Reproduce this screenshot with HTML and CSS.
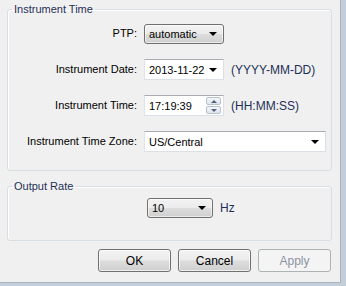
FILE: index.html
```html
<!DOCTYPE html>
<html>
<head>
<meta charset="utf-8">
<link rel="stylesheet" href="styles.css">
</head>
<body>
<div class="client">
  <fieldset class="group g1">
    <legend>Instrument Time</legend>
    <div class="form">
      <label class="lbl">PTP:</label>
      <div class="field">
        <div class="combo btn w80"><span>automatic</span><i class="arrow"></i></div>
      </div>
      <label class="lbl">Instrument Date:</label>
      <div class="field">
        <div class="combo edit w80"><span>2013-11-22</span><i class="arrow"></i></div>
        <span class="hint">(YYYY-MM-DD)</span>
      </div>
      <label class="lbl">Instrument Time:</label>
      <div class="field">
        <div class="spin edit w80"><span>17:19:39</span>
          <div class="spinbtns"><div class="sb up"><i></i></div><div class="sb down"><i></i></div></div>
        </div>
        <span class="hint">(HH:MM:SS)</span>
      </div>
      <label class="lbl">Instrument Time Zone:</label>
      <div class="field">
        <div class="combo edit wzone"><span>US/Central</span><i class="arrow"></i></div>
      </div>
    </div>
  </fieldset>
  <fieldset class="group g2">
    <legend>Output Rate</legend>
    <div class="rate">
      <div class="combo btn w66"><span>10</span><i class="arrow"></i></div>
      <span class="hint">Hz</span>
    </div>
  </fieldset>
  <div class="buttons">
    <button class="pb">OK</button>
    <button class="pb">Cancel</button>
    <button class="pb disabled">Apply</button>
  </div>
</div>
</body>
</html>
```
FILE: styles.css
```css
html, body {
  margin: 0;
  padding: 0;
}
body {
  width: 346px;
  height: 286px;
  background: #c3cedb;
  font-family: "Liberation Sans", Arial, sans-serif;
  font-size: 11px;
  color: #000;
  overflow: hidden;
}
.client {
  box-sizing: border-box;
  width: 341px;
  height: 283px;
  background: #f0f0f0;
  border-right: 1px solid #a9b4c2;
  border-bottom: 1px solid #a9b4c2;
  padding: 3px 8px 0 7px;
  display: flex;
  flex-direction: column;
}
.group {
  margin: 0;
  padding: 0;
  border: 1px solid #d5dfe5;
  border-radius: 3px;
  box-shadow: inset 1px 1px 0 #fff;
}
.group legend {
  margin-left: 4px;
  padding: 0 2px;
  color: #1e2f57;
  line-height: 13px;
}
.g1 {
  height: 168px;
  box-sizing: border-box;
}
.form {
  display: grid;
  grid-template-columns: 129px 1fr;
  column-gap: 7px;
  row-gap: 15px;
  padding-top: 7px;
}
.lbl {
  text-align: right;
  line-height: 21px;
  height: 21px;
}
.field {
  display: flex;
  align-items: center;
  gap: 7px;
  height: 21px;
}
.hint {
  color: #1e2f57;
  font-size: 12px;
}
.combo, .spin {
  box-sizing: border-box;
  position: relative;
  display: flex;
  align-items: center;
  padding-left: 4px;
}
.w80 { width: 80px; }
.w66 { width: 66px; }
.wzone { width: 182px; }
.combo.btn {
  height: 20px;
  border: 1px solid #707070;
  border-radius: 3px;
  background: linear-gradient(#f3f3f3 0%, #ebebeb 48%, #dddddd 52%, #cfcfcf 100%);
  box-shadow: inset 0 0 0 1px rgba(255,255,255,0.6);
}
.combo.edit, .spin.edit {
  height: 21px;
  background: #fff;
  border: 1px solid #dbdfe6;
  border-top-color: #abadb3;
  border-left-color: #e2e3ea;
}
.arrow {
  position: absolute;
  right: 6px;
  top: 50%;
  margin-top: -2px;
  width: 0;
  height: 0;
  border-left: 4px solid transparent;
  border-right: 4px solid transparent;
  border-top: 4px solid #000;
}
.spinbtns {
  position: absolute;
  right: 2px;
  top: 1px;
  bottom: 1px;
  width: 15px;
  display: flex;
  flex-direction: column;
  gap: 1px;
}
.sb {
  flex: 1;
  border: 1px solid #b7c2cf;
  border-radius: 2px;
  background: linear-gradient(#f6f7f9, #dfe4ea);
  display: flex;
  align-items: center;
  justify-content: center;
}
.sb i {
  width: 0;
  height: 0;
  border-left: 3px solid transparent;
  border-right: 3px solid transparent;
}
.sb.up i { border-bottom: 3px solid #4d6185; }
.sb.down i { border-top: 3px solid #4d6185; }
.g2 {
  margin-top: 9px;
  height: 61px;
  box-sizing: border-box;
}
.rate {
  display: flex;
  align-items: center;
  gap: 7px;
  padding-left: 139px;
  padding-top: 5px;
}
.buttons {
  display: flex;
  justify-content: flex-end;
  gap: 7px;
  padding-top: 8px;
  padding-right: 1px;
}
.pb {
  width: 73px;
  height: 23px;
  box-sizing: border-box;
  font-family: "Liberation Sans", Arial, sans-serif;
  font-size: 12px;
  color: #000;
  border: 1px solid #707070;
  border-radius: 3px;
  background: linear-gradient(#f3f3f3 0%, #ebebeb 48%, #dddddd 52%, #cfcfcf 100%);
  box-shadow: inset 0 0 0 1px rgba(255,255,255,0.7);
  padding: 0;
}
.pb.disabled {
  color: #8b93a3;
  border-color: #adb2b5;
  background: #f4f4f4;
  box-shadow: none;
}
```
